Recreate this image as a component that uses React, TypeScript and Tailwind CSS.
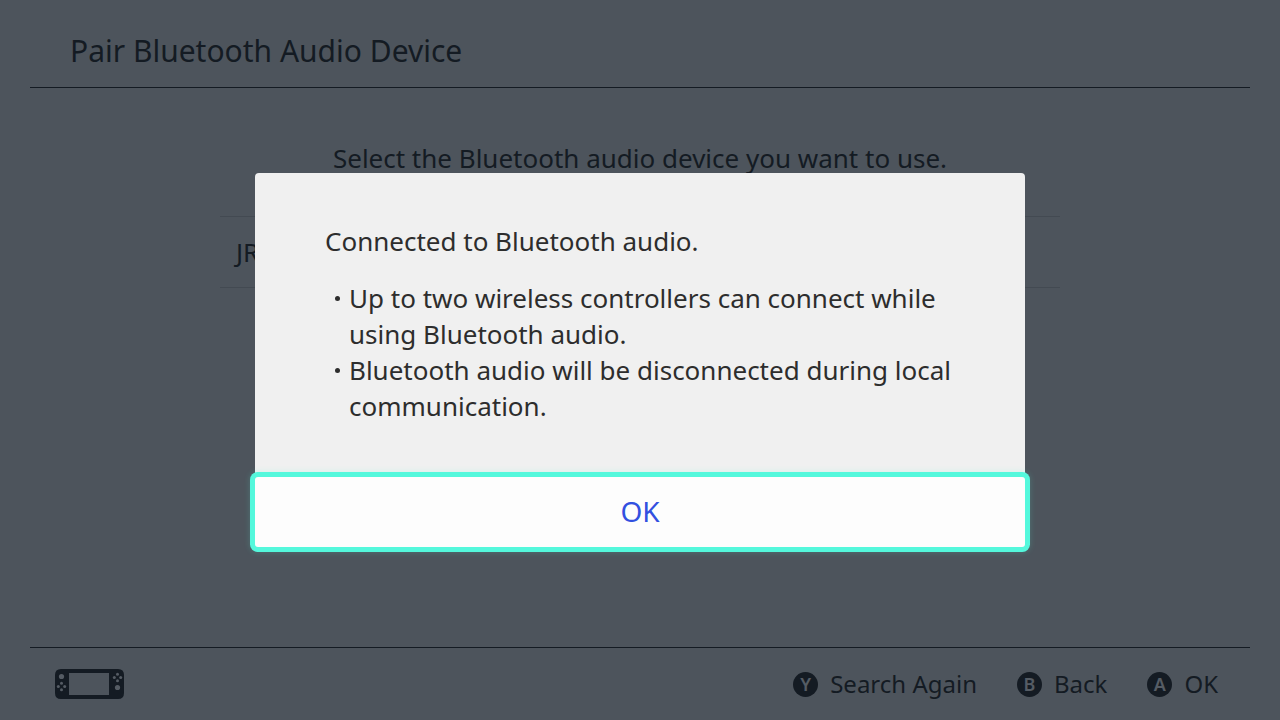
import { useState } from 'react';

function ConsoleIcon() {
  return (
    <svg viewBox="0 0 70 30" className="h-[30px] w-[70px]" aria-hidden="true">
      <path
        fillRule="evenodd"
        d="M6 0H63Q69 0 69 6V24Q69 30 63 30H6Q0 30 0 24V6Q0 0 6 0ZM14 4V26H54V4Z"
        fill="#141b23"
      />
      <g fill="#555c64">
        <circle cx="6.5" cy="7.5" r="2.6" />
        <circle cx="6.5" cy="14.3" r="1.5" />
        <circle cx="6.5" cy="20.7" r="1.5" />
        <circle cx="3.3" cy="17.5" r="1.5" />
        <circle cx="9.7" cy="17.5" r="1.5" />
        <circle cx="62.5" cy="5.3" r="1.5" />
        <circle cx="62.5" cy="11.7" r="1.5" />
        <circle cx="59.3" cy="8.5" r="1.5" />
        <circle cx="65.7" cy="8.5" r="1.5" />
        <circle cx="62.5" cy="18.5" r="2.6" />
      </g>
    </svg>
  );
}

function Hint({ letter, label, onClick }: { letter: string; label: string; onClick?: () => void }) {
  return (
    <button type="button" onClick={onClick} className="flex items-center gap-3">
      <span className="flex h-[25px] w-[25px] items-center justify-center rounded-full bg-[#141b23] text-lg leading-none font-semibold text-[#555c64]">
        {letter}
      </span>
      <span className="text-2xl">{label}</span>
    </button>
  );
}

const notes = [
  'Up to two wireless controllers can connect while using Bluetooth audio.',
  'Bluetooth audio will be disconnected during local communication.',
];

export default function App() {
  const [open, setOpen] = useState(true);

  return (
    <div className="relative flex min-h-screen flex-col bg-[#4d545c] px-[30px] font-['Noto_Sans','Open_Sans',sans-serif] text-[#141b23]">
      <header className="flex h-[88px] items-center border-b border-[#141b23] px-10 pt-3.5">
        <h1 className="text-[30px]">Pair Bluetooth Audio Device</h1>
      </header>

      <main className="mx-auto w-full max-w-[840px] flex-1 pt-[52px]">
        <p className="text-center text-[26px] leading-9">Select the Bluetooth audio device you want to use.</p>
        <ul className="mt-10 border-y border-[#434a52]">
          <li>
            <button type="button" className="flex h-[70px] w-full items-center px-4 text-[26px]">JR</button>
          </li>
        </ul>
      </main>

      <footer className="flex h-[73px] items-center justify-between border-t border-[#141b23] pr-8 pl-[25px]">
        <ConsoleIcon />
        <div className="flex gap-10">
          <Hint letter="Y" label="Search Again" />
          <Hint letter="B" label="Back" />
          <Hint letter="A" label="OK" onClick={() => setOpen(false)} />
        </div>
      </footer>

      {open && (
        <div className="absolute inset-0 flex items-center justify-center p-6">
          <div
            role="dialog"
            aria-modal="true"
            aria-labelledby="connected-title"
            className="w-full max-w-[770px] rounded bg-[#f0f0f0] text-[26px] text-[#2d2d2d]"
          >
            <div className="px-[70px] pt-[50px] pb-[53px] leading-9">
              <h2 id="connected-title">Connected to Bluetooth audio.</h2>
              <ul className="mt-[21px]">
                {notes.map((note) => (
                  <li key={note} className="flex">
                    <span className="flex h-9 w-6 shrink-0 items-center justify-center" aria-hidden="true">
                      <span className="h-[5px] w-[5px] rounded-full bg-[#2d2d2d]" />
                    </span>
                    <span>{note}</span>
                  </li>
                ))}
              </ul>
            </div>
            <button
              type="button"
              onClick={() => setOpen(false)}
              className="flex h-[70px] w-full items-center justify-center rounded-[3px] bg-[#fdfdfd] pb-0.5 text-[28px] text-[#3250e0] shadow-[0_0_0_5px_#54f8dc,0_0_6px_5px_rgba(84,248,220,0.2)] outline-none"
            >
              OK
            </button>
          </div>
        </div>
      )}
    </div>
  );
}
